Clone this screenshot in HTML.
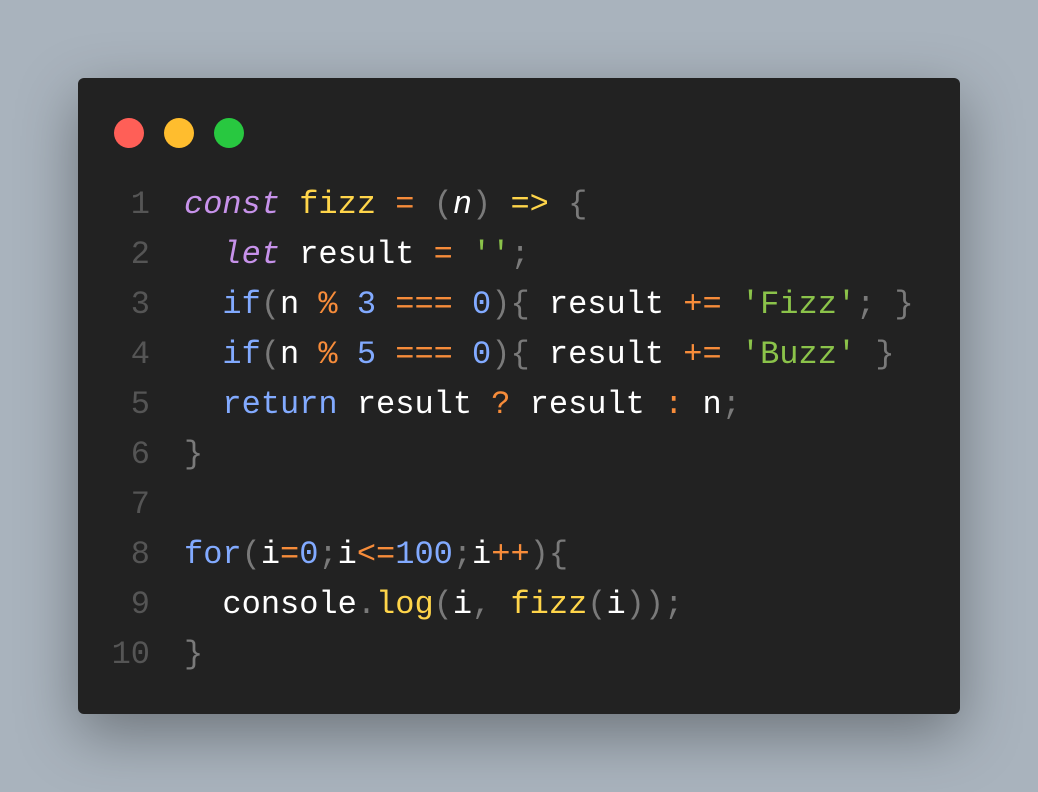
<!DOCTYPE html>
<html><head><style>
html,body{margin:0;padding:0}
body{width:1038px;height:792px;background:#a9b3bd;position:relative;overflow:hidden}
.win{position:absolute;left:78px;top:78px;width:882px;height:636px;background:#222222;border-radius:6px;box-shadow:0 20px 60px rgba(0,0,0,.35)}
.dot{position:absolute;top:40px;width:30px;height:30px;border-radius:50%}
.code{position:absolute;left:0;top:102px;font-family:"Liberation Mono",monospace;font-size:32px;line-height:50px;color:#fff;white-space:pre}
.ln{position:absolute;left:0;width:72px;text-align:right;color:#555}
.l{position:absolute;left:106px}
.k{color:#c792ea;font-style:italic}.y{color:#ffd54a}.o{color:#f78c3a}.p{color:#7a7a7a}.b{color:#82aaff}.g{color:#8bc34a}.i{font-style:italic}
</style></head><body>
<div class="win">
<div class="dot" style="left:36px;background:#ff5f57"></div>
<div class="dot" style="left:86px;background:#ffbd2e"></div>
<div class="dot" style="left:136px;background:#28c840"></div>
<div class="code">
<div class="ln" style="top:0">1</div><div class="l" style="top:0"><span class="k">const</span> <span class="y">fizz</span> <span class="o">=</span> <span class="p">(</span><span class="i">n</span><span class="p">)</span> <span class="y">=&gt;</span> <span class="p">{</span></div>
<div class="ln" style="top:50px">2</div><div class="l" style="top:50px">  <span class="k">let</span> result <span class="o">=</span> <span class="g">''</span><span class="p">;</span></div>
<div class="ln" style="top:100px">3</div><div class="l" style="top:100px">  <span class="b">if</span><span class="p">(</span>n <span class="o">%</span> <span class="b">3</span> <span class="o">===</span> <span class="b">0</span><span class="p">){</span> result <span class="o">+=</span> <span class="g">'Fizz'</span><span class="p">;</span> <span class="p">}</span></div>
<div class="ln" style="top:150px">4</div><div class="l" style="top:150px">  <span class="b">if</span><span class="p">(</span>n <span class="o">%</span> <span class="b">5</span> <span class="o">===</span> <span class="b">0</span><span class="p">){</span> result <span class="o">+=</span> <span class="g">'Buzz'</span> <span class="p">}</span></div>
<div class="ln" style="top:200px">5</div><div class="l" style="top:200px">  <span class="b">return</span> result <span class="o">?</span> result <span class="o">:</span> n<span class="p">;</span></div>
<div class="ln" style="top:250px">6</div><div class="l" style="top:250px"><span class="p">}</span></div>
<div class="ln" style="top:300px">7</div>
<div class="ln" style="top:350px">8</div><div class="l" style="top:350px"><span class="b">for</span><span class="p">(</span>i<span class="o">=</span><span class="b">0</span><span class="p">;</span>i<span class="o">&lt;=</span><span class="b">100</span><span class="p">;</span>i<span class="o">++</span><span class="p">){</span></div>
<div class="ln" style="top:400px">9</div><div class="l" style="top:400px">  console<span class="p">.</span><span class="y">log</span><span class="p">(</span>i<span class="p">,</span> <span class="y">fizz</span><span class="p">(</span>i<span class="p">));</span></div>
<div class="ln" style="top:450px">10</div><div class="l" style="top:450px"><span class="p">}</span></div>
</div>
</div>
</body></html>
